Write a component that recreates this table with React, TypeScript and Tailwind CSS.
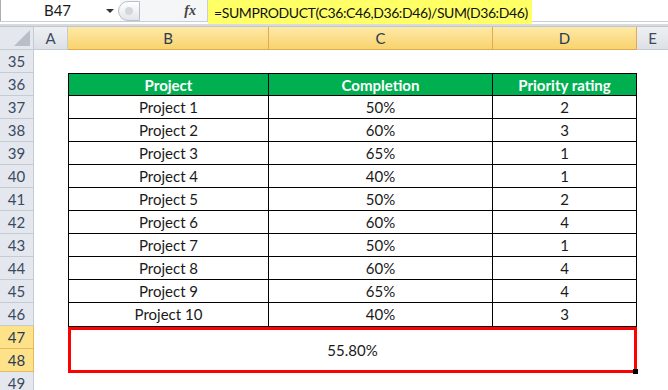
const rows = [
  ["Project 1", "50%", "2"],
  ["Project 2", "60%", "3"],
  ["Project 3", "65%", "1"],
  ["Project 4", "40%", "1"],
  ["Project 5", "50%", "2"],
  ["Project 6", "60%", "4"],
  ["Project 7", "50%", "1"],
  ["Project 8", "60%", "4"],
  ["Project 9", "65%", "4"],
  ["Project 10", "40%", "3"],
];

const font = { fontFamily: "Lato, 'Open Sans', sans-serif" };

function RowHead({ n, sel = false }: { n: number; sel?: boolean }) {
  return (
    <div
      className={`h-[23px] flex items-center justify-center border-b border-r text-[15px] ${
        sel
          ? "bg-[#fde28a] border-[#e7b85c] text-[#2b3a55]"
          : "bg-[#e4e8ee] border-[#c5cbd3] text-[#3b4a60]"
      }`}
    >
      {n}
    </div>
  );
}

export default function App() {
  return (
    <div className="w-[668px] h-[390px] overflow-hidden bg-white text-[#1a1a1a]" style={font}>
      {/* formula bar */}
      <div className="h-[22px] flex items-stretch border-b border-[#c9ced6]">
        <div className="w-[120px] flex items-center border-l border-[#a8aeb6] bg-white">
          <span className="flex-1 text-center text-[15px] pl-[8px]">B47</span>
          <span className="w-0 h-0 mr-[6px] border-l-[4px] border-r-[4px] border-t-[4px] border-l-transparent border-r-transparent border-t-[#333]" />
        </div>
        <div className="w-[88px] flex items-center bg-[#f4f6f8] border-r border-[#c9ced6]">
          <div className="w-[22px] h-[20px] -ml-[2px] rounded-l-full border border-[#b9bfc7] bg-gradient-to-b from-white to-[#e2e6ea] flex items-center justify-center">
            <div className="w-[8px] h-[8px] rounded-full bg-[#d3d7dc]" />
          </div>
          <span className="ml-auto mr-[11px] italic font-bold text-[14px] text-[#444]" style={{ fontFamily: "'Liberation Serif', serif" }}>
            fx
          </span>
        </div>
        <div className="flex-1 flex items-stretch">
          <div className="bg-[#ffff66] h-[24px] pl-[6px] pr-[4px] flex items-center text-[14px] tracking-[-0.4px] text-[#111]">
            =SUMPRODUCT(C36:C46,D36:D46)/SUM(D36:D46)
          </div>
        </div>
      </div>
      <div className="h-[2px] bg-white" />
      <div className="h-[3px] bg-[#d7dbe0] border-b border-[#c0c5cc]" />

      {/* sheet */}
      <div className="grid grid-cols-[34px_34px_201px_224px_144px_31px]">
        {/* column headers */}
        <div className="h-[23px] bg-[#e4e8ee] border-r border-b border-[#c5cbd3] flex items-end justify-end pr-[3px] pb-[3px]">
          <svg width="16" height="16" viewBox="0 0 16 16">
            <polygon points="16,0 16,16 0,16" fill="#b9bfc7" />
          </svg>
        </div>
        <div className="h-[23px] bg-gradient-to-b from-[#eef0f3] to-[#dde1e6] border-r border-b border-[#c5cbd3] flex items-center justify-center text-[15px] text-[#3b4a60]">
          A
        </div>
        {["B", "C", "D"].map((c) => (
          <div
            key={c}
            className="h-[23px] bg-gradient-to-b from-[#fde9a6] to-[#f9d36c] border-r border-b border-[#e0aa55] flex items-center justify-center text-[15px] text-[#2b3a55]"
          >
            {c}
          </div>
        ))}
        <div className="h-[23px] bg-gradient-to-b from-[#eef0f3] to-[#dde1e6] border-b border-[#c5cbd3] flex items-center justify-center text-[15px] text-[#3b4a60]">
          E
        </div>

        {/* row headers column */}
        <div className="flex flex-col">
          <RowHead n={35} />
          {rows.map((_, i) => (
            <RowHead key={i} n={36 + i} />
          ))}
          <RowHead n={46} />
          <RowHead n={47} sel />
          <RowHead n={48} sel />
          <RowHead n={49} />
        </div>

        {/* column A */}
        <div />

        {/* table B..D */}
        <div className="col-span-3 flex flex-col">
          <div className="h-[23px]" />
          <div className="border border-black">
            <div className="grid grid-cols-[200px_224px_143px] h-[22px] bg-[#00b050] text-white font-bold text-[15px] border-b border-black">
              <div className="flex items-center justify-center border-r border-black">Project</div>
              <div className="flex items-center justify-center border-r border-black">Completion</div>
              <div className="flex items-center justify-center">Priority rating</div>
            </div>
            {rows.map((r, i) => (
              <div
                key={i}
                className={`grid grid-cols-[200px_224px_143px] h-[23px] text-[15px] ${
                  i < rows.length - 1 ? "border-b border-black" : ""
                }`}
              >
                <div className="flex items-center justify-center border-r border-black">{r[0]}</div>
                <div className="flex items-center justify-center border-r border-black">{r[1]}</div>
                <div className="flex items-center justify-center">{r[2]}</div>
              </div>
            ))}
          </div>
          <div className="relative h-[46px] border-[3px] border-[#ff0000] flex items-center justify-center text-[15px]">
            55.80%
            <div className="absolute -right-[4px] -bottom-[4px] w-[5px] h-[5px] bg-black" />
          </div>
        </div>

        {/* column E */}
        <div />
      </div>
    </div>
  );
}
